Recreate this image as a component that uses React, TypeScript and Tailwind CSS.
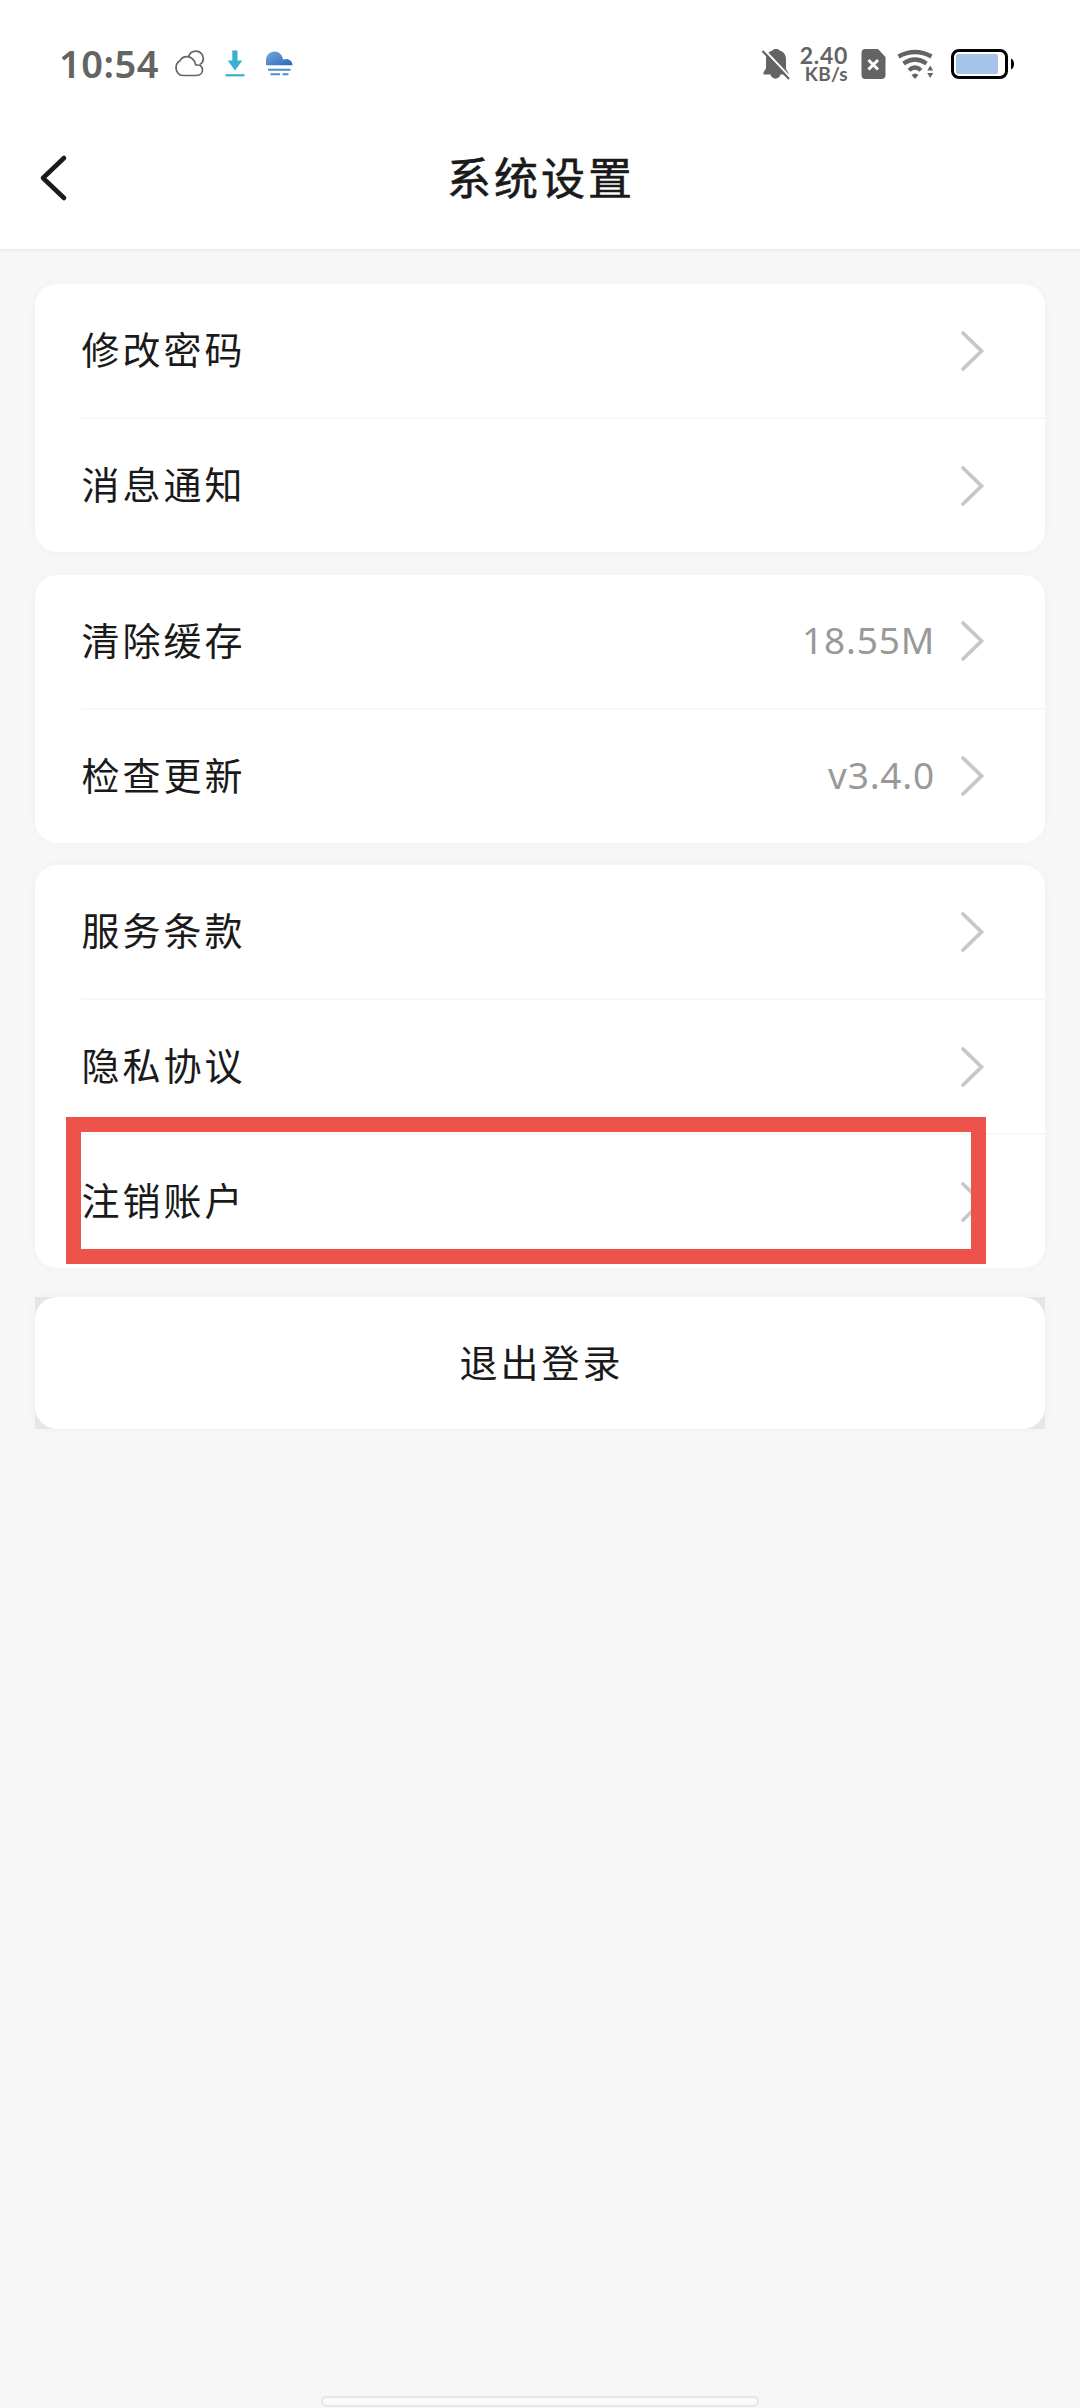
import React from 'react';
import { clsx } from 'clsx';

interface SettingItem {
  label: string;
  value?: string;
  highlighted?: boolean;
}

const groups: SettingItem[][] = [
  [{ label: '修改密码' }, { label: '消息通知' }],
  [
    { label: '清除缓存', value: '18.55M' },
    { label: '检查更新', value: 'v3.4.0' },
  ],
  [{ label: '服务条款' }, { label: '隐私协议' }, { label: '注销账户', highlighted: true }],
];

function StatusBar() {
  return (
    <div className="flex h-[130px] items-start justify-between pl-[59px] pr-[64px] pt-[42px] text-[#646464]">
      <div className="flex h-11 items-center">
        <span className="w-[101px] whitespace-nowrap pb-[2px] font-['Noto_Sans'] text-[38px] font-semibold leading-none tracking-[0.5px]">
          10:54
        </span>
        {/* Cloud */}
        <svg className="ml-[14px] h-[30px] w-[32px]" viewBox="0 0 32 30" fill="none" stroke="#646464" strokeWidth="1.7">
          <path d="M9 26.500h13.500c3.500 0 6-2.300 6-5.400 0-2.700-1.700-4.600-4-5.100h-2.800C21 10.800 17 7.700 12.700 7.700c-2.800 0-5.300 1.500-6.700 4C3.300 13.300 2 15.600 2 18.600c0 4.400 3 7.900 7 7.900z" strokeLinejoin="round" />
          <path d="M14.500 7.800C15.500 4.500 18.500 2.200 22 2.200c4.200 0 7.300 3.200 7.300 7.200 0 2.600-1.200 4.700-3.300 6" />
        </svg>
        {/* Download */}
        <svg className="ml-[18px] h-[30px] w-[22px]" viewBox="0 0 22 30" fill="#35b1d1">
          <path d="M8.300 1.500h5.200v10h4.800L11 21.500 3.700 11.500h4.600z" />
          <path d="M1.500 25.200h19v2.200h-19z" />
        </svg>
        {/* Weather */}
        <svg className="ml-[17px] h-[30px] w-[32px]" viewBox="0 0 32 30">
          <defs>
            <linearGradient id="cloud" x1="0" y1="0" x2="1" y2="1">
              <stop offset="0" stopColor="#75a9dd" />
              <stop offset="1" stopColor="#2868b3" />
            </linearGradient>
          </defs>
          <path d="M3 16.300v-5C3 6.300 6.700 2.500 11.500 2.500c4.500 0 7.700 3 8.500 8 4.500-1.700 9.500.5 9.500 5.800z" fill="url(#cloud)" />
          <path d="M5 20.800h22.500M7.500 25.300h9.500M19.500 25.300h6" stroke="#4d8fc9" strokeWidth="2" />
        </svg>
      </div>

      <div className="flex h-11 items-center">
        {/* Muted bell */}
        <svg className="h-[34px] w-[30px]" viewBox="0 0 30 34">
          <path d="M11.500 3.500C12.500 1.600 17.500 1.600 18.500 3.500c4 1 6.500 4.300 6.500 8.500v10l2.500 4v1.500H19.500c-1 5.500-9 5.500-10 0H2.500v-2.300L5 21.500V12c0-4.200 2.500-7.500 6.500-8.500z" fill="#646464" />
          <path d="M3 2.500l26 27.500" stroke="#fff" strokeWidth="2" />
          <path d="M1.500 4l26.500 28" stroke="#646464" strokeWidth="2.200" />
        </svg>
        <div className="ml-2 flex w-[49px] flex-col items-end whitespace-nowrap font-['Lato'] font-bold">
          <span className="text-[23px] leading-[19px] tracking-[0.7px]">2.40</span>
          <span className="text-[19px] leading-[18px] tracking-[0.3px]">KB/s</span>
        </div>
        {/* SIM card without service */}
        <svg className="ml-[13px] h-[32px] w-[26px]" viewBox="0 0 26 32">
          <path d="M4.500 1H17l7.500 8v18a4 4 0 0 1-4 4h-16a4 4 0 0 1-4-4V5a4 4 0 0 1 4-4z" fill="#646464" />
          <path d="M7.500 12l9.500 9.500M17 12L7.500 21.500" stroke="#fff" strokeWidth="3" />
        </svg>
        {/* Wi-Fi */}
        <svg className="ml-[10px] h-[32px] w-[40px]" viewBox="0 0 40 32">
          <g fill="none" stroke="#646464" strokeWidth="4.300">
            <path d="M1.500 8.500Q18-.5 34.500 8.500" />
            <path d="M6.500 15.500Q18 7.500 29.500 15.500" />
            <path d="M12 22.300Q18 16.700 24 22.300" />
          </g>
          <path d="M14.500 27Q18 24 21.500 27L18 31z" fill="#646464" />
          <path d="M33.200 17.500l3 5h-6zM33.200 30l3-5h-6z" fill="#646464" />
        </svg>
        {/* Battery */}
        <svg className="ml-[13px] h-[32px] w-[66px]" viewBox="0 0 66 32">
          <rect x="2.500" y="2.500" width="54" height="27" rx="6.500" fill="#fff" stroke="#000" strokeWidth="3" />
          <rect x="6" y="6" width="42" height="20" rx="2" fill="#a5c4e8" />
          <path d="M61 10.500c4 1.500 4 9.500 0 11z" fill="#000" />
        </svg>
      </div>
    </div>
  );
}

function SettingRow({ item, divided }: { item: SettingItem; divided: boolean }) {
  return (
    <div className={clsx('relative ml-[46px]', divided && 'border-t-2 border-[#f7f7f7]')}>
      <div className="flex h-[133px] items-center justify-between pr-[60px]">
        <span className="pb-[5px] pl-[0.5px] text-[38px] leading-none tracking-[3px]">{item.label}</span>
        <div className="flex items-center">
          {item.value && (
            <span className="mr-[25px] pb-[3px] font-['Noto_Sans'] text-[37px] leading-none tracking-[0.8px] text-[#999999]">
              {item.value}
            </span>
          )}
          <svg className="h-[42px] w-[25px]" viewBox="0 0 25 42" fill="none" stroke="#c7c7c7" strokeWidth="3.800">
            <path d="M3 3l18.500 18L3 39" strokeLinecap="round" />
          </svg>
        </div>
      </div>
      {item.highlighted && (
        <div className="absolute -left-[15.5px] -top-[18.5px] h-[147px] w-[920px] border-[15px] border-[#ed524b]" />
      )}
    </div>
  );
}

export default function App() {
  return (
    <div className="flex h-[2408px] w-[1080px] flex-col overflow-hidden bg-[#f7f7f7] font-['Noto_Sans_CJK_SC',sans-serif] text-[#1a1a1a]">
      <header className="h-[249px] shrink-0 bg-white shadow-[0_1px_4px_rgba(0,0,0,0.08)]">
        <StatusBar />
        <div className="flex h-[96px] items-center px-[38px]">
          <svg className="h-[50px] w-[30px]" viewBox="0 0 30 50" fill="none" stroke="#1a1a1a" strokeWidth="4.600">
            <path d="M26 5L5 25l21 20" strokeLinecap="round" strokeLinejoin="round" />
          </svg>
          <h1 className="mr-[30px] flex-1 pb-[4px] pl-[2px] text-center text-[44px] font-normal leading-none tracking-[3px] [-webkit-text-stroke:0.6px_#1a1a1a]">
            系统设置
          </h1>
        </div>
      </header>

      <main className="flex flex-1 flex-col gap-[22.5px] px-[35px] pt-[35px]">
        {groups.map((items, index) => (
          <section key={index} className="rounded-[22px] bg-white shadow-[0_0_12px_rgba(0,0,0,0.03)]">
            {items.map((item, i) => (
              <SettingRow key={item.label} item={item} divided={i > 0} />
            ))}
          </section>
        ))}

        <div className="mt-[6px] bg-[#e6e6e6] shadow-[0_0_12px_rgba(0,0,0,0.03)]">
          <button className="flex h-[132px] w-full items-center justify-center rounded-[22px] bg-white pb-[4px] pl-[3px] text-[38px] leading-none tracking-[3px]">
            退出登录
          </button>
        </div>
      </main>

      {/* Gesture bar */}
      <div className="mb-[1px] h-[11px] w-[438px] self-center rounded-full border-2 border-[#e6e6e6] bg-[#fbfbfb]" />
    </div>
  );
}
